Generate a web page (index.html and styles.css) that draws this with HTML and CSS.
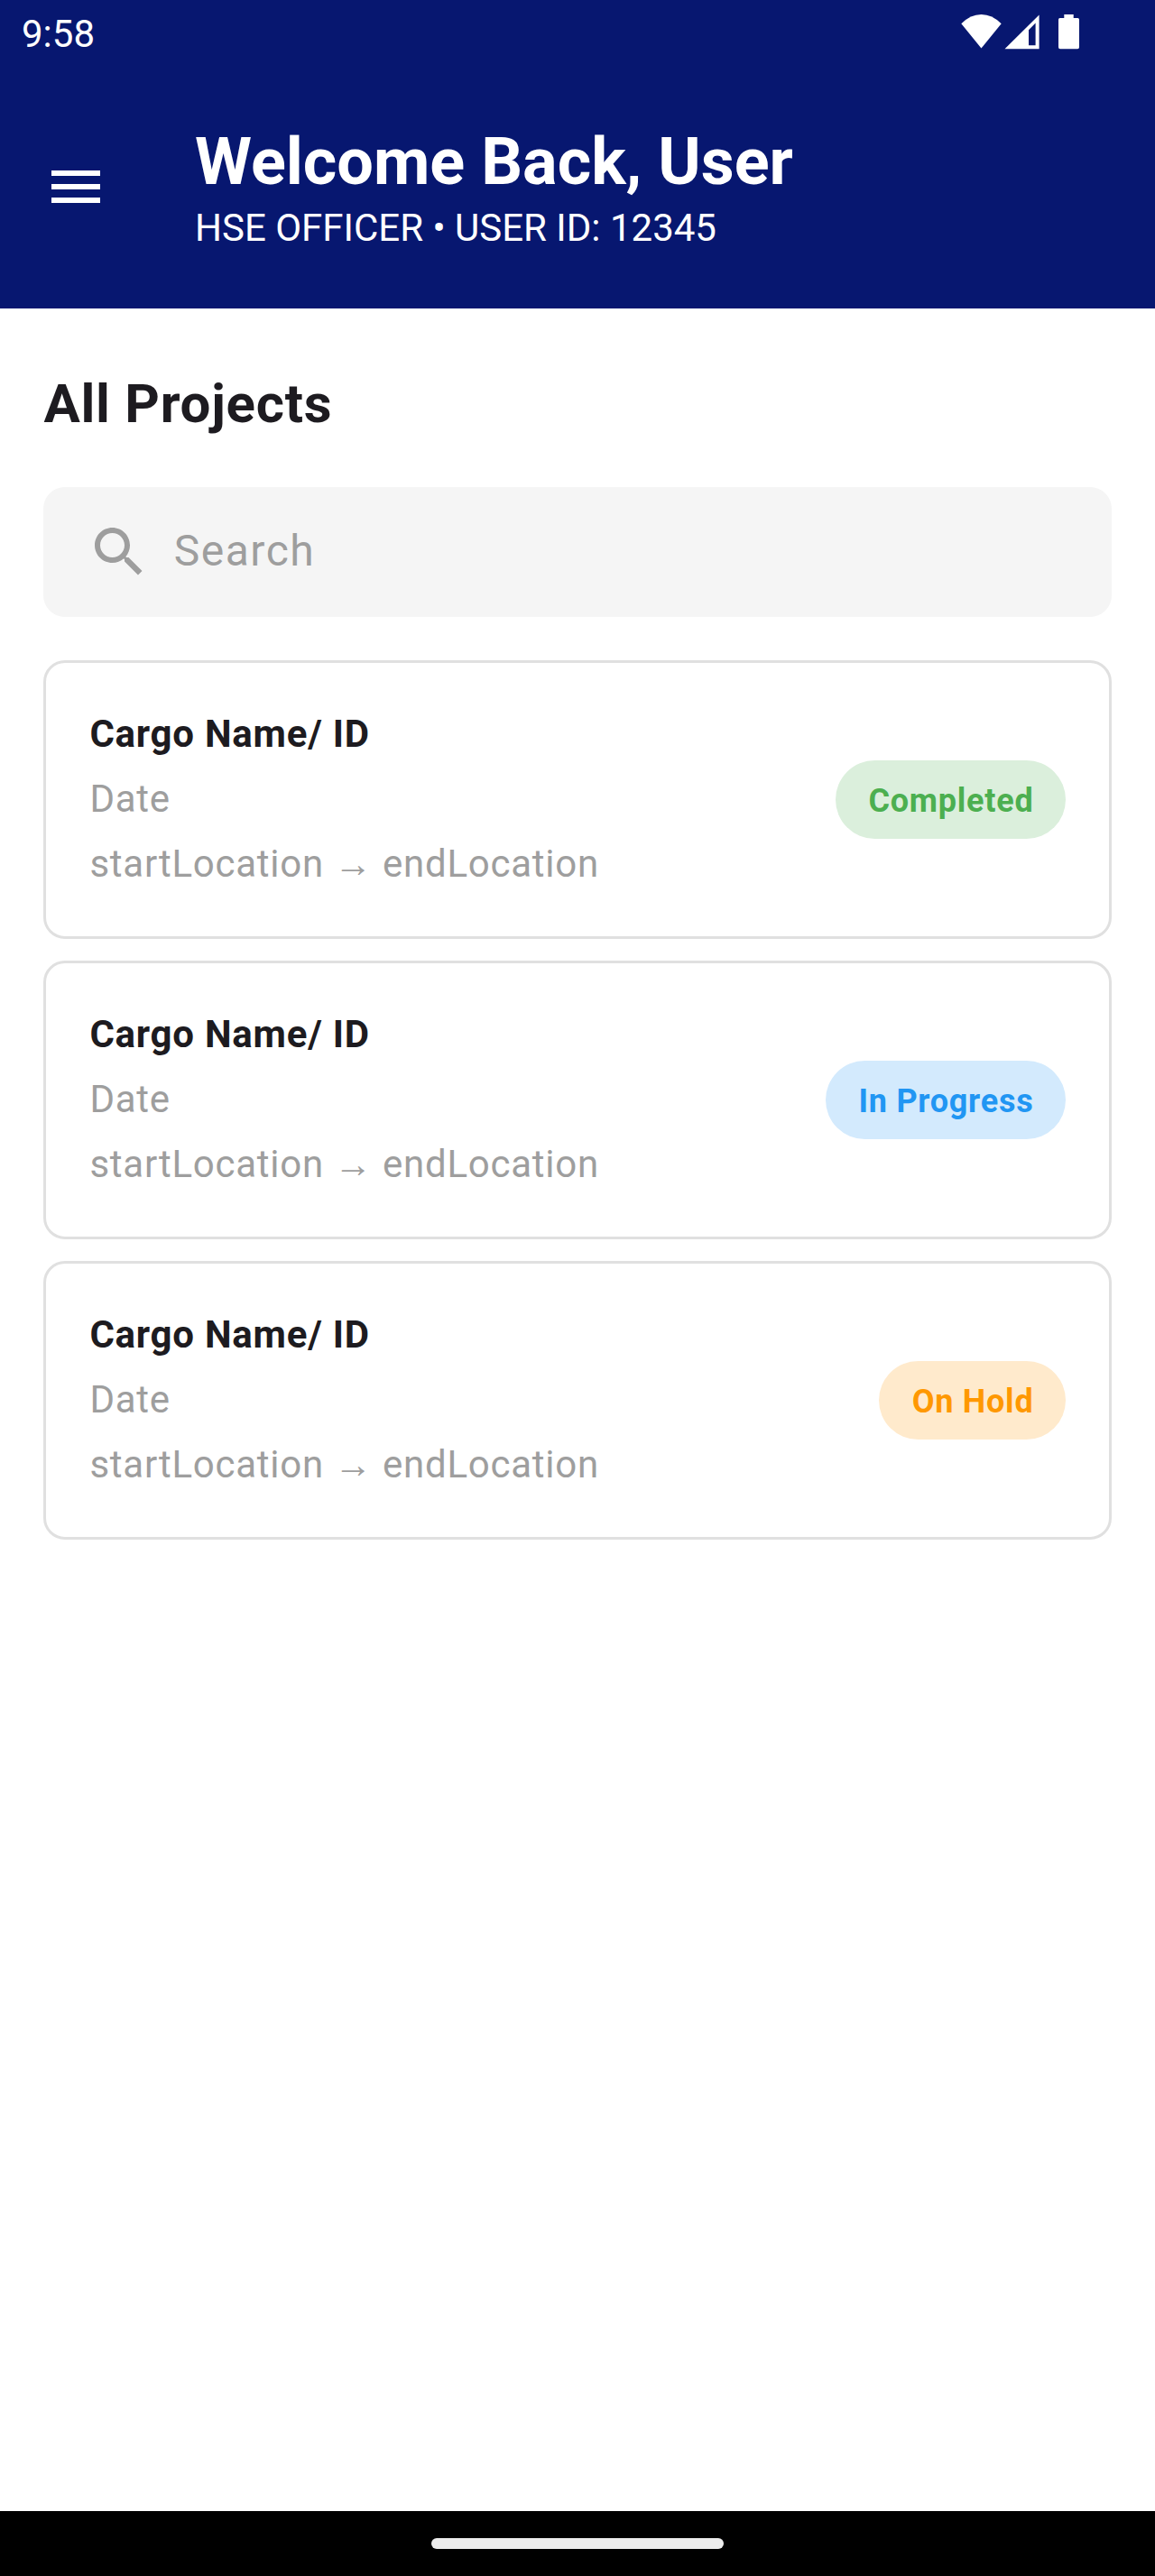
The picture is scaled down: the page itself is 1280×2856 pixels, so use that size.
FILE: index.html
```html
<!DOCTYPE html>
<html lang="en">
<head>
<meta charset="utf-8">
<title>All Projects</title>
<link rel="stylesheet" href="styles.css">
</head>
<body>
<div class="screen">
  <header class="header">
    <div class="status">
      <span class="time">9:58</span>
      <svg class="status-icons" viewBox="0 0 132 40" fill="#fff">
        <path d="M0.3 11.3Q10.5 1 22.5 1T44.7 11.3L22.5 38.6Z"/>
        <path fill-rule="evenodd" d="M48.5 39.2H86.6V1.6ZM75 18.2L82.6 10.6V35.3H75Z"/>
        <path d="M114.3 1H124.7V5H129.4Q131 5 131 6.8V37.2Q131 39.3 129.2 39.3H109.8Q108 39.3 108 37.2V6.8Q108 5 109.6 5H114.3Z"/>
      </svg>
    </div>
    <div class="appbar">
      <svg class="icon" viewBox="0 0 24 24" fill="#fff"><path d="M3 18h18v-2H3v2zm0-5h18v-2H3v2zm0-7v2h18V6H3z"/></svg>
      <div class="greeting">
        <h1 class="welcome">Welcome Back, User</h1>
        <p class="role">HSE OFFICER • USER ID: 12345</p>
      </div>
    </div>
  </header>
  <main class="content">
    <h2 class="heading">All Projects</h2>
    <div class="search">
      <svg class="icon" viewBox="0 0 24 24" fill="#9e9e9e"><path d="M15.5 14h-.79l-.28-.27C15.41 12.59 16 11.11 16 9.5 16 5.91 13.09 3 9.5 3S3 5.91 3 9.5 5.91 16 9.5 16c1.61 0 3.09-.59 4.23-1.57l.27.28v.79l5 4.99L20.49 19l-4.99-5zm-6 0C7.01 14 5 11.99 5 9.5S7.01 5 9.5 5 14 7.01 14 9.5 11.99 14 9.5 14z"/></svg>
      <span class="placeholder">Search</span>
    </div>
    <section class="cards">
      <article class="card">
        <div class="details">
          <h3 class="name">Cargo Name/ ID</h3>
          <p class="meta">Date</p>
          <p class="meta">startLocation → endLocation</p>
        </div>
        <span class="badge completed">Completed</span>
      </article>
      <article class="card">
        <div class="details">
          <h3 class="name">Cargo Name/ ID</h3>
          <p class="meta">Date</p>
          <p class="meta">startLocation → endLocation</p>
        </div>
        <span class="badge progress">In Progress</span>
      </article>
      <article class="card">
        <div class="details">
          <h3 class="name">Cargo Name/ ID</h3>
          <p class="meta">Date</p>
          <p class="meta">startLocation → endLocation</p>
        </div>
        <span class="badge hold">On Hold</span>
      </article>
    </section>
  </main>
  <footer class="navbar"><div class="handle"></div></footer>
</div>
</body>
</html>
```
FILE: styles.css
```css
* { box-sizing: border-box; margin: 0; padding: 0; }
body { font-family: Roboto, sans-serif; background: #fff; color: #1d1b20; }
.screen { width: 1280px; height: 2856px; display: flex; flex-direction: column; }
.header { height: 342px; background: #071770; color: #fff; }
.status { height: 72px; padding: 15px 83px 0 24px; display: flex; justify-content: space-between; align-items: flex-start; }
.time { margin-top: 1px; font-size: 42px; line-height: 44px; }
.status-icons { width: 132px; height: 40px; }
.appbar { height: 270px; padding: 69px 48px 0; display: flex; gap: 96px; }
.icon { width: 72px; height: 72px; flex: none; display: block; }
.appbar .icon { margin-top: 30px; }
.welcome { font-size: 72px; line-height: 78px; font-weight: 700; white-space: nowrap; }
.role { margin-top: 4px; font-size: 42px; line-height: 60px; white-space: nowrap; }
.content { flex: 1; padding: 73px 48px 0; }
.heading { padding-left: 0.4px; font-size: 60px; line-height: 66px; font-weight: 700; letter-spacing: 0.75px; }
.search { margin-top: 59px; height: 144px; border-radius: 24px; background: #f5f5f5; padding: 0 48px; display: flex; align-items: center; gap: 24px; }
.placeholder { padding: 0 0 2px 0.75px; font-size: 48px; line-height: 72px; letter-spacing: 1.5px; color: #9e9e9e; display: block; }
.cards { margin-top: 48px; display: flex; flex-direction: column; gap: 24px; }
.card { height: 309px; border: 3px solid #e0e0e0; border-radius: 24px; padding: 48px; display: flex; justify-content: space-between; align-items: center; }
.details { height: 207px; padding: 1px 0 0 0.4px; display: flex; flex-direction: column; gap: 12px; }
.name, .meta { font-size: 42px; line-height: 60px; letter-spacing: 0.75px; white-space: nowrap; }
.name { font-weight: 700; }
.meta { color: #9e9e9e; }
.badge { height: 87px; border-radius: 60px; padding: 20px 35.6px 16px 36.4px; font-size: 36px; line-height: 51px; font-weight: 700; letter-spacing: 0.75px; white-space: nowrap; }
.completed { background: #dbefdc; color: #4caf50; }
.progress { background: #d3eafd; color: #2196f3; }
.hold { background: #ffeacc; color: #ff9800; }
.navbar { height: 72px; background: #000; padding-top: 30px; }
.handle { width: 324px; height: 12px; border-radius: 6px; background: #ececec; margin: 0 auto; }
```
